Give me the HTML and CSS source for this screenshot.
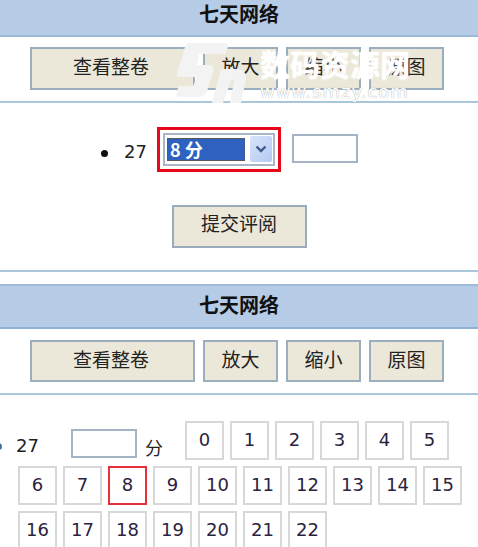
FILE: index.html
```html
<!DOCTYPE html>
<html lang="zh-CN">
<head>
<meta charset="utf-8">
<title>七天网络</title>
<link rel="stylesheet" href="styles.css">
</head>
<body>
<section class="panel">
  <h1 class="head">七天网络</h1>
  <div class="toolbar">
    <button class="btn wide">查看整卷</button>
    <button class="btn">放大</button>
    <button class="btn">缩小</button>
    <button class="btn">原图</button>
  </div>
  <div class="form">
    <div class="question">
      <span class="bullet"></span>
      <span class="qnum">27</span>
      <div class="redbox">
        <div class="select">
          <span class="selected">8 分</span>
          <span class="arrow">
            <svg width="12" height="8" viewBox="0 0 12 8"><path d="M1.5 1.5 6 6l4.500-4.500" fill="none" stroke="#3f5a8c" stroke-width="2.400"/></svg>
          </span>
        </div>
      </div>
      <span class="field first"></span>
    </div>
    <button class="btn submit">提交评阅</button>
  </div>
</section>
<section class="panel second">
  <h1 class="head top">七天网络</h1>
  <div class="toolbar">
    <button class="btn wide">查看整卷</button>
    <button class="btn">放大</button>
    <button class="btn">缩小</button>
    <button class="btn">原图</button>
  </div>
  <div class="scores">
    <div class="label">
      <span class="bullet cut"></span>
      <span class="qnum small">27</span>
      <span class="field"></span>
      <span class="unit">分</span>
    </div>
    <button class="score">0</button>
    <button class="score">1</button>
    <button class="score">2</button>
    <button class="score">3</button>
    <button class="score">4</button>
    <button class="score">5</button>
    <button class="score">6</button>
    <button class="score">7</button>
    <button class="score on">8</button>
    <button class="score">9</button>
    <button class="score">10</button>
    <button class="score">11</button>
    <button class="score">12</button>
    <button class="score">13</button>
    <button class="score">14</button>
    <button class="score">15</button>
    <button class="score">16</button>
    <button class="score">17</button>
    <button class="score">18</button>
    <button class="score">19</button>
    <button class="score">20</button>
    <button class="score">21</button>
    <button class="score">22</button>
  </div>
</section>
<div class="mark">
  <svg class="logo" width="100" height="75" viewBox="0 0 100 75"><path d="M24 8H60Q64 8 63 12L60 19H34L32 30H44Q50 30 48 37L42 56Q40 62 33 62H14Q10 62 12 56L14 51H28L32 42H14Q11 42 12 38L20 12Q21 8 24 8Z" fill="#f3f3f3"/><path d="M56 34H70Q82 34 81 44L76 68H65L69 46Q69 42 66 46L58 68H47Z" fill="#f3f3f3"/></svg>
  <div class="marktext">
    <div class="markcn">数码资源网</div>
    <div class="markurl">www.smzy.com</div>
  </div>
</div>
</body>
</html>
```
FILE: styles.css
```css
html, body {
  margin: 0;
  padding: 0;
  background: #fff;
}
body {
  width: 478px;
  height: 547px;
  overflow: hidden;
  position: relative;
  font-family: "Noto Sans CJK SC", "DejaVu Sans", sans-serif;
  color: #222;
}
.head {
  margin: 0;
  height: 35px;
  line-height: 28px;
  background: #b5cbe6;
  border-bottom: 2px solid #9dbbd6;
  text-align: center;
  font-size: 20px;
  font-weight: 700;
  color: #111;
}
.head.top {
  height: 41px;
  line-height: 38px;
  border-top: 2px solid #9dbbd6;
  border-bottom: 2px solid #8fb0d0;
}
.toolbar {
  display: flex;
  gap: 8px;
  padding: 10px 0 11px 30px;
  border-bottom: 2px solid #a9c6da;
}
.btn {
  width: 75px;
  height: 43px;
  padding: 0 0 7px;
  box-sizing: border-box;
  background: #ece8d9;
  border: 2px solid #9aaebf;
  font-family: inherit;
  font-size: 19px;
  color: #222;
}
.wide {
  width: 165px;
  padding-right: 3px;
}
.form {
  height: 169px;
  box-sizing: border-box;
  border-bottom: 2px solid #a9c6da;
  display: flex;
  flex-direction: column;
  align-items: center;
  padding-top: 24px;
}
.question {
  display: flex;
  align-items: center;
  align-self: flex-start;
  margin-left: 101px;
  height: 44px;
}
.bullet {
  width: 7px;
  height: 7px;
  border-radius: 50%;
  background: #111;
  margin-right: 16px;
  position: relative;
  top: 4px;
}
.qnum {
  font-family: "DejaVu Sans", sans-serif;
  font-size: 18px;
  width: 33px;
  position: relative;
  top: 2px;
}
.redbox {
  width: 124px;
  height: 45px;
  box-sizing: border-box;
  border: 3px solid #e60a18;
  padding: 3px;
}
.select {
  height: 33px;
  box-sizing: border-box;
  border: 2px solid #a8b6c8;
  display: flex;
  align-items: center;
  justify-content: space-between;
  padding: 0 1px 0 2px;
}
.selected {
  width: 78px;
  height: 23px;
  box-sizing: border-box;
  background: #2f62c0;
  border: 1px dotted #555;
  color: #fff;
  font-size: 18px;
  font-weight: 700;
  line-height: 20px;
  padding-left: 2px;
}
.arrow {
  width: 22px;
  height: 26px;
  background: linear-gradient(135deg, #d8e4fb, #b4c9f2);
  border-radius: 2px;
  display: flex;
  align-items: center;
  justify-content: center;
}
.field {
  display: block;
  width: 66px;
  height: 29px;
  box-sizing: border-box;
  border: 2px solid #a4b4c4;
  background: #fff;
}
.field.first {
  margin-left: 11px;
  margin-top: -2px;
}
.submit {
  width: 135px;
  margin-top: 34px;
  border-color: #9aabbd;
  padding-bottom: 8px;
}
.second {
  margin-top: 12px;
}
.second .btn {
  height: 42px;
  padding-bottom: 6px;
}
.second .toolbar {
  padding: 11px 0 11px 30px;
}
.scores {
  display: flex;
  flex-wrap: wrap;
  gap: 6px;
  padding: 26px 0 0 18px;
}
.score {
  width: 39px;
  height: 39px;
  padding: 0 0 2px;
  box-sizing: border-box;
  background: #fff;
  border: 2px solid #d8d8d8;
  font-family: "DejaVu Sans", sans-serif;
  font-size: 18px;
  color: #2a2340;
}
.score.on {
  border-color: #e8303a;
}
.label {
  margin-left: -18px;
  width: 179px;
  height: 39px;
  display: flex;
  align-items: flex-end;
  position: relative;
}
.bullet.cut {
  position: absolute;
  left: -5px;
  top: 22px;
  margin: 0;
  background: #3d6f9c;
}
.qnum.small {
  margin-left: 16px;
  width: 55px;
  top: 0;
  line-height: 26px;
  padding-bottom: 1px;
}
.unit {
  margin-left: 8px;
  font-size: 18px;
  line-height: 26px;
}
.label .field {
  margin-bottom: 2px;
}
.mark {
  position: absolute;
  left: 165px;
  top: 35px;
  display: flex;
  color: #fff;
}
.logo {
  display: block;
}
.marktext {
  margin: 10px 0 0 -5px;
}
.markcn {
  font-size: 30px;
  line-height: 36px;
  font-weight: 700;
  white-space: nowrap;
  color: #fff;
  text-shadow: 0 0 2px #fff;
}
.markurl {
  margin-top: 1px;
  font-family: "DejaVu Sans", sans-serif;
  font-size: 18px;
  line-height: 20px;
  letter-spacing: 1px;
  white-space: nowrap;
  color: #fff;
  text-shadow: 0 0 1px #8a8a8a;
}
```
